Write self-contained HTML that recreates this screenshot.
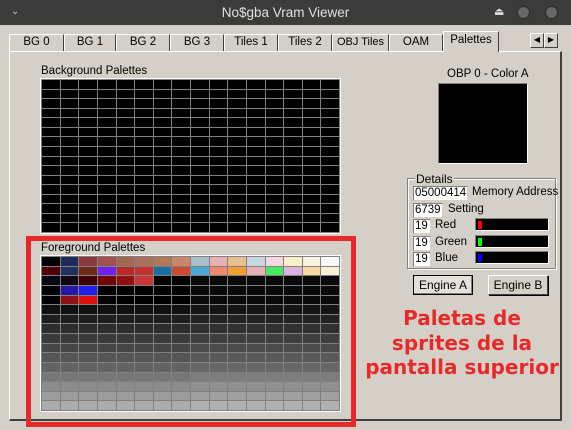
<!DOCTYPE html>
<html><head><meta charset="utf-8"><style>
*{margin:0;padding:0;box-sizing:border-box}
body{width:571px;height:430px;background:#d4d0c8;position:relative;overflow:hidden;font-family:"Liberation Sans",sans-serif;font-size:11px;color:#000}
.a{position:absolute}
#title{left:0;top:0;width:571px;height:25px;background:#3b3b3b;color:#e0e0e0;font-size:13.5px;text-align:center;line-height:25px}
.tab{position:absolute;top:34px;height:17px;border:1px solid #fff;border-right:1px solid #404040;border-bottom:none;text-align:center;line-height:15px;font-size:11.5px}
.grid{position:absolute;display:grid;grid-template-columns:repeat(16,1fr);grid-template-rows:repeat(16,1fr);gap:1px;background:#808080;border:1px solid #808080;outline:1px solid #fff;outline-offset:0}
.grid div{background:#000}
.in{background:#fff;border:1px solid #808080;border-right-color:#d4d0c8;border-bottom-color:#d4d0c8;position:absolute;font-size:11.5px;line-height:13px;padding-left:1px}
.lb{position:absolute;font-size:11.5px}
.bar{position:absolute;background:#000;border:1px solid #808080;border-right-color:#fff;border-bottom-color:#fff;height:13px;width:74px;left:475px}
.bar i{position:absolute;left:2px;top:2px;width:4px;height:8px}
.btn{position:absolute;height:20px;border:1px solid #fff;border-right-color:#404040;border-bottom-color:#404040;text-align:center;line-height:18px;font-size:12px}
</style></head><body>
<div id="title" class="a">No$gba Vram Viewer</div>
<div class="a" style="left:11px;top:6px;color:#ccc;font-size:10px">&#8964;</div>
<div class="a" style="left:494px;top:5px;color:#ddd;font-size:11px">&#9167;</div>
<div class="a" style="left:517px;top:6px;width:13px;height:13px;border-radius:50%;background:#666;border:1px solid #2a2a2a"></div>
<div class="a" style="left:545px;top:6px;width:13px;height:13px;border-radius:50%;background:#666;border:1px solid #2a2a2a"></div>

<div class="a" style="left:9px;top:51px;width:553px;height:370px;border:1px solid #fff;border-right:2px solid #404040;border-bottom:2px solid #404040"></div>
<div class="tab" style="left:9px;width:55px">BG 0</div>
<div class="tab" style="left:64px;width:52px">BG 1</div>
<div class="tab" style="left:116px;width:54px">BG 2</div>
<div class="tab" style="left:170px;width:54px">BG 3</div>
<div class="tab" style="left:224px;width:54px">Tiles 1</div>
<div class="tab" style="left:278px;width:54px">Tiles 2</div>
<div class="tab" style="left:332px;width:57px;font-size:11px">OBJ Tiles</div>
<div class="tab" style="left:389px;width:54px">OAM</div>
<div class="tab" style="left:443px;top:31px;width:56px;height:21px;background:#d4d0c8;line-height:17px">Palettes</div>
<div class="btn" style="left:530px;top:33px;width:14px;height:15px;line-height:12px;font-size:8px">&#9664;</div>
<div class="btn" style="left:544px;top:33px;width:14px;height:15px;line-height:12px;font-size:8px">&#9654;</div>

<div class="a" style="left:41px;top:65px;font-size:11.5px">Background Palettes</div>
<div class="grid" id="bg" style="left:41px;top:79px;width:299px;height:154px"></div>

<div class="a" style="left:41px;top:242px;font-size:11.5px">Foreground Palettes</div>
<div class="grid" id="fg" style="left:41px;top:256px;width:299px;height:155px"></div>

<div class="a" style="left:447px;top:68px;font-size:11.5px">OBP 0 - Color A</div>
<div class="a" style="left:438px;top:83px;width:90px;height:81px;background:#000;border:1px solid #808080;border-right-color:#fff;border-bottom-color:#fff"></div>

<div class="a" style="left:407px;top:178px;width:149px;height:91px;border:1px solid #808080;box-shadow:1px 1px 0 #fff inset,1px 1px 0 #fff"></div>
<div class="a" style="left:415px;top:172px;background:#d4d0c8;padding:0 1px;font-size:12px">Details</div>
<div class="in" style="left:413px;top:186px;width:55px;height:15px">05000414</div>
<div class="lb" style="left:472px;top:186px">Memory Address</div>
<div class="in" style="left:413px;top:203px;width:30px;height:15px">6739</div>
<div class="lb" style="left:448px;top:203px">Setting</div>
<div class="in" style="left:413px;top:219px;width:18px;height:15px">19</div>
<div class="lb" style="left:435px;top:219px">Red</div>
<div class="bar" style="top:218px"><i style="background:#f00"></i></div>
<div class="in" style="left:413px;top:236px;width:18px;height:15px">19</div>
<div class="lb" style="left:435px;top:236px">Green</div>
<div class="bar" style="top:235px"><i style="background:#0f0"></i></div>
<div class="in" style="left:413px;top:252px;width:18px;height:15px">19</div>
<div class="lb" style="left:435px;top:252px">Blue</div>
<div class="bar" style="top:251px"><i style="background:#00f"></i></div>

<div class="btn" style="left:413px;top:275px;width:60px;border:1px solid #000;background:#e4e1dc;box-shadow:inset -1px -1px #808080">Engine A</div>
<div class="btn" style="left:488px;top:275px;width:60px;box-shadow:1px 1px 0 #000">Engine B</div>

<div class="a" style="left:26px;top:236px;width:330px;height:191px;border:5px solid #e8292a"></div>
<div class="a" style="left:358px;top:306px;width:208px;text-align:center;color:#e8292a;font-family:'DejaVu Sans',sans-serif;font-weight:bold;font-size:20px;line-height:24.5px">Paletas de<br>sprites de la<br>pantalla superior</div>

<script>
var bg=document.getElementById('bg');for(var i=0;i<256;i++)bg.appendChild(document.createElement('div'));
var rows=[
["000000","1f2a5a","8b3a3f","a0504e","a06a50","a87058","b07858","c8886a","a8c0c8","e8b0b0","e8c090","c8d8e0","f8d8e0","f8f0c8","f8f0e0","f8f8f8"],
["500008","203060","702818","7020f0","c02828","c83030","1870a0","d04830","48a8d8","f08870","f0a030","e8b0b0","48e860","e0b0e0","f8d8a0","f8f0d8"],
["080810","100810","400008","700808","901010","c83838"],
["000000","2818a8","2020e8"],
["000000","901010","e01010"]];
var grays=[0x11,0x1e,0x2c,0x3a,0x47,0x55,0x63,0x78,0x8c,0x9c,0xac];
var fg=document.getElementById('fg');
for(var r=0;r<16;r++)for(var c=0;c<16;c++){var d=document.createElement('div');var col;
if(r<5){col=rows[r][c]?'#'+rows[r][c]:(c<8?'#000':'#0a0a0a');}
else{var g=grays[r-5]+(c>=8?4:0);col='rgb('+g+','+g+','+g+')';}
d.style.background=col;fg.appendChild(d);}
</script>
</body></html>
